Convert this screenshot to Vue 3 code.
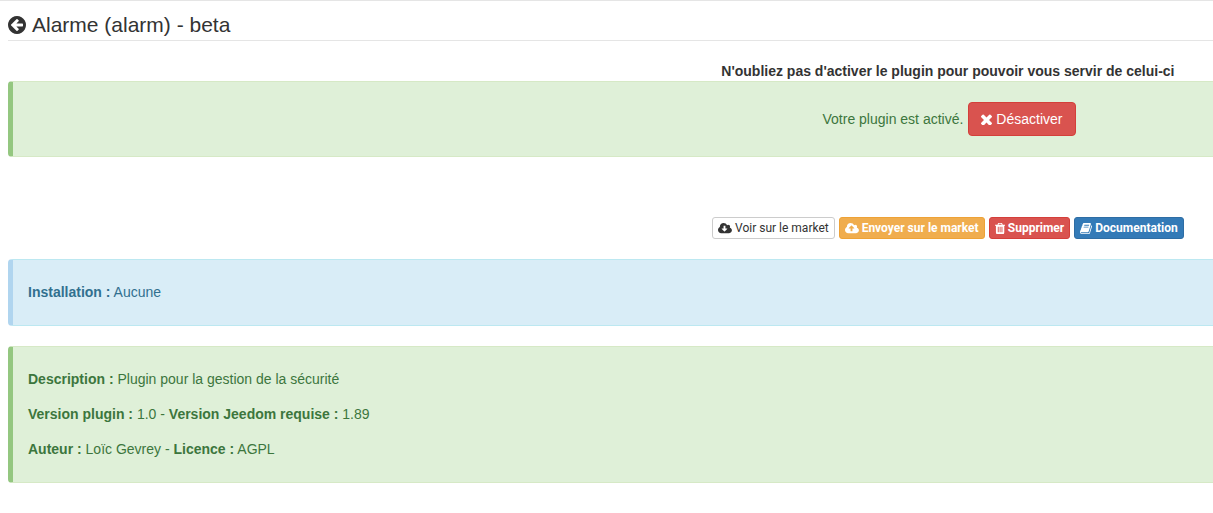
<script setup>
const cloud = 'm640 224q0 159-112.5 271.5t-271.5 112.5h-1088q-185 0-316.5-131.5t-131.5-316.5q0-130 70-240t188-165q-2-30-2-43 0-212 150-362t362-150q156 0 285.5 87t188.5 231q71-62 166-62 106 0 181 75t75 181q0 76-41 138 130 31 213.5 135.5t83.5 238.5z'

const actions = [
  {
    label: 'Voir sur le market',
    kind: 'default',
    box: '-64 0 1920 1792',
    icon: 'M1216 928q0-14-9-23t-23-9h-224v-352q0-13-9.5-22.5t-22.5-9.5h-192q-13 0-22.5 9.5t-9.5 22.5v352h-224q-13 0-22.5 9.5t-9.5 22.5q0 14 9 23l352 352q9 9 23 9t23-9l351-351q10-12 10-24z' + cloud,
  },
  {
    label: 'Envoyer sur le market',
    kind: 'warning',
    box: '-64 0 1920 1792',
    icon: 'M1216 864q0-14-9-23l-352-352q-9-9-23-9t-23 9l-351 351q-10 12-10 24 0 14 9 23t23 9h224v352q0 13 9.5 22.5t22.5 9.5h192q13 0 22.5-9.5t9.5-22.5v-352h224q13 0 22.5-9.5t9.5-22.5zm0 64' + cloud,
  },
  {
    label: 'Supprimer',
    kind: 'danger',
    box: '192 0 1408 1792',
    icon: 'M704 1376v-704q0-14-9-23t-23-9h-64q-14 0-23 9t-9 23v704q0 14 9 23t23 9h64q14 0 23-9t9-23zm256 0v-704q0-14-9-23t-23-9h-64q-14 0-23 9t-9 23v704q0 14 9 23t23 9h64q14 0 23-9t9-23zm256 0v-704q0-14-9-23t-23-9h-64q-14 0-23 9t-9 23v704q0 14 9 23t23 9h64q14 0 23-9t9-23zm-544-992h448l-48-117q-7-9-17-11h-317q-10 2-17 11zm928 32v64q0 14-9 23t-23 9h-96v948q0 83-47 143.5t-113 60.5h-832q-66 0-113-58.5t-47-141.5v-952h-96q-14 0-23-9t-9-23v-64q0-14 9-23t23-9h309l70-167q15-37 54-63t79-26h320q40 0 79 26t54 63l70 167h309q14 0 23 9t9 23z',
  },
  {
    label: 'Documentation',
    kind: 'primary',
    box: '64 0 1664 1792',
    icon: 'M1703 478q40 57 18 129l-275 906q-19 64-76.5 107.5t-122.5 43.5h-923q-77 0-148.5-53.5t-99.5-131.5q-24-67-2-127 0-4 3-27t4-37q1-8-3-21.5t-3-19.5q2-11 8-21t16.5-23.5 16.5-23.5q23-38 45-91.5t30-91.5q3-10 .5-30t-.5-28q3-11 17-28t17-23q21-36 42-92t25-90q1-9-2.5-32t.5-28q4-13 22-30.5t22-22.5q19-26 42.5-84.5t27.5-96.5q1-8-3-25.5t-2-26.5q2-8 9-18t18-23 17-21q8-12 16.5-30.5t15-35 16-36 19.5-32 26.5-23.5 36-11.5 47.5 5.5l-1 3q38-9 51-9h761q74 0 114 56t18 130l-274 906q-36 119-71.5 153.5t-128.5 34.5h-869q-27 0-38 15-11 16-1 43 24 70 144 70h923q29 0 56-15.5t35-41.5l300-987q7-22 5-57 38 15 59 43zm-1064 2q-4 13 2 22.5t20 9.5h608q13 0 25.5-9.5t16.5-22.5l21-64q4-13-2-22.5t-20-9.5h-608q-13 0-25.5 9.5t-16.5 22.5zm-83 256q-4 13 2 22.5t20 9.5h608q13 0 25.5-9.5t16.5-22.5l21-64q4-13-2-22.5t-20-9.5h-608q-13 0-25.5 9.5t-16.5 22.5z',
  },
]
</script>

<template>
  <main class="page">
    <h1 class="title">
      <svg class="back" viewBox="128 128 1536 1536" aria-hidden="true">
        <path d="M1408 960v-128q0-26-19-45t-45-19h-502l189-189q19-19 19-45t-19-45l-91-91q-18-18-45-18t-45 18l-362 362-91 91q-18 18-18 45t18 45l91 91 362 362q18 18 45 18t45-18l91-91q18-18 18-45t-18-45l-189-189h502q26 0 45-19t19-45zm256-64q0 209-103 385.5t-279.5 279.5-385.5 103-385.5-103-279.5-279.5-103-385.5 103-385.5 279.5-279.5 385.5-103 385.5 103 279.5 279.5 103 385.5z" />
      </svg>
      Alarme (alarm) - beta
    </h1>

    <p class="side reminder">N'oubliez pas d'activer le plugin pour pouvoir vous servir de celui-ci</p>
    <section class="panel success status">
      <div class="side state">
        <span>Votre plugin est activé.</span>
        <button type="button" class="btn danger">
          <svg class="cross" viewBox="302 302 1188 1188" aria-hidden="true">
            <path d="M1490 1322q0 40-28 68l-136 136q-28 28-68 28t-68-28l-294-294-294 294q-28 28-68 28t-68-28l-136-136q-28-28-28-68t28-68l294-294-294-294q-28-28-28-68t28-68l136-136q28-28 68-28t68 28l294 294 294-294q28-28 68-28t68 28l136 136q28 28 28 68t-28 68l-294 294 294 294q28 28 28 68z" />
          </svg>
          Désactiver
        </button>
      </div>
    </section>

    <div class="side actions">
      <button v-for="a in actions" :key="a.label" type="button" class="btn small" :class="a.kind">
        <svg class="icon" :viewBox="a.box" aria-hidden="true"><path :d="a.icon" /></svg>
        {{ a.label }}
      </button>
    </div>

    <section class="panel info">
      <p><strong>Installation :</strong> Aucune</p>
    </section>

    <section class="panel success">
      <p><strong>Description :</strong> Plugin pour la gestion de la sécurité</p>
      <p><strong>Version plugin :</strong> 1.0 - <strong>Version Jeedom requise :</strong> 1.89</p>
      <p><strong>Auteur :</strong> Loïc Gevrey - <strong>Licence :</strong> AGPL</p>
    </section>
  </main>
</template>

<style>
body {
  margin: 0;
  background: #fff;
}
</style>

<style scoped>
.page {
  border-top: 1px solid #e5e5e5;
  padding: 9px 0 20px 8px;
  color: #333;
  font: 14px/20px "Liberation Sans", Arial, sans-serif;
}
svg {
  fill: currentColor;
  flex: none;
}
.title {
  display: flex;
  align-items: center;
  gap: 6px;
  margin: 0 0 20px;
  border-bottom: 1px solid #e5e5e5;
  font-size: 21px;
  font-weight: 400;
  line-height: 30px;
}
.back {
  width: 18px;
  height: 18px;
}
.side {
  display: flex;
  justify-content: center;
  align-items: center;
  margin-left: 56%;
}
.reminder {
  margin-top: 0;
  margin-bottom: 0;
  font-weight: 700;
}
.panel {
  margin-bottom: 20px;
  border: 1px solid;
  border-left-width: 5px;
  border-right: 0;
  border-radius: 4px 0 0 4px;
  padding: 22px 15px 23px;
}
.panel p {
  margin: 0 0 15px;
}
.panel p:last-child {
  margin-bottom: 0;
}
.panel.success {
  border-color: #d6e9c6;
  border-left-color: #94c780;
  background: #dff0d8;
  color: #3c763d;
}
.panel.info {
  border-color: #bce8f1;
  border-left-color: #b0d5ef;
  background: #d9edf7;
  color: #31708f;
}
.panel.status {
  margin-bottom: 60px;
  padding: 20px 0;
}
.state {
  gap: 5px;
}
.btn {
  display: flex;
  align-items: center;
  gap: 4px;
  border: 1px solid;
  border-radius: 4px;
  padding: 6px 12px;
  color: #fff;
  font: 14px/20px "Liberation Sans", Arial, sans-serif;
  white-space: nowrap;
}
.cross {
  width: 11px;
  height: 11px;
}
.actions {
  gap: 4px;
  margin-bottom: 20px;
}
.btn.small {
  gap: 3px;
  border-radius: 3px;
  padding: 1px 5px;
  font: 700 12px/18px Roboto, sans-serif;
}
.icon {
  height: 13px;
}
.btn.small.default {
  border-color: #ccc;
  background: #fff;
  color: #333;
  font-weight: 400;
}
.btn.warning {
  border-color: #eea236;
  background: #f0ad4e;
}
.btn.danger {
  border-color: #d43f3a;
  background: #d9534f;
}
.btn.primary {
  border-color: #2e6da4;
  background: #337ab7;
}
</style>
